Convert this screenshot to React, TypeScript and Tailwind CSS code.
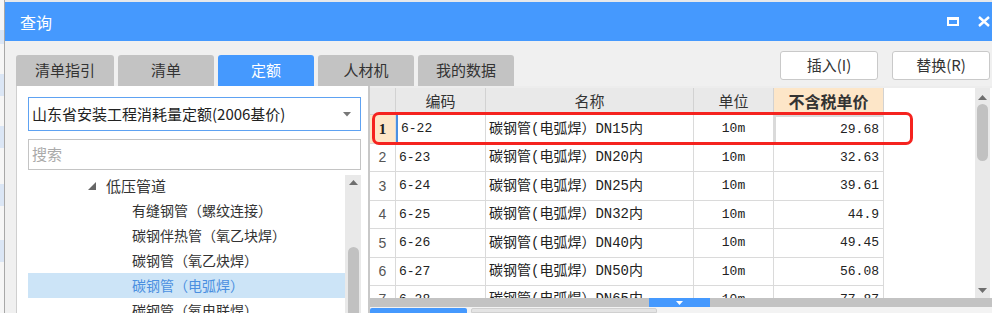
import React from "react";

const rows = [
  { n: 1, code: "6-22", name: "碳钢管(电弧焊）DN15内", unit: "10m", price: "29.68", h: "h-[29px]" },
  { n: 2, code: "6-23", name: "碳钢管(电弧焊）DN20内", unit: "10m", price: "32.63", h: "h-[28px]" },
  { n: 3, code: "6-24", name: "碳钢管(电弧焊）DN25内", unit: "10m", price: "39.61", h: "h-[29px]" },
  { n: 4, code: "6-25", name: "碳钢管(电弧焊）DN32内", unit: "10m", price: "44.9", h: "h-[28px]" },
  { n: 5, code: "6-26", name: "碳钢管(电弧焊）DN40内", unit: "10m", price: "49.45", h: "h-[29px]" },
  { n: 6, code: "6-27", name: "碳钢管(电弧焊）DN50内", unit: "10m", price: "56.08", h: "h-[28px]" },
  { n: 7, code: "6-28", name: "碳钢管(电弧焊）DN65内", unit: "10m", price: "77.87", h: "h-[28px]" },
];

const tabs = [
  { label: "清单指引", w: "w-[98px]" },
  { label: "清单", w: "w-[96px]" },
  { label: "定额", w: "w-[96px]", active: true },
  { label: "人材机", w: "w-[96px]" },
  { label: "我的数据", w: "w-[96px]" },
];

const tree = [
  "有缝钢管（螺纹连接）",
  "碳钢伴热管（氧乙块焊）",
  "碳钢管（氧乙炔焊）",
  "碳钢管（电弧焊）",
  "碳钢管（氧电联焊）",
];

const mono = "font-['Liberation_Mono','Noto_Sans_CJK_SC',monospace]";

export default function App() {
  return (
    <div className="w-[992px] h-[313px] overflow-hidden flex bg-[#e6e8eb] font-['Noto_Sans_CJK_SC',sans-serif] text-[#333]">
      {/* background app peeking out on the left */}
      <div className="w-[5px] flex flex-col border-r border-[#a8a8a8] bg-[#f6f6f6]">
        <div className="h-[30px]" />
        <div className="h-[14px] bg-[#dbe6f5]" />
        <div className="h-[30px]" />
        <div className="h-[22px] bg-[#dbe6f5]" />
        <div className="h-[30px]" />
        <div className="h-[22px] bg-[#dbe6f5]" />
        <div className="h-[36px]" />
        <div className="h-[22px] bg-[#dbe6f5]" />
        <div className="h-[34px]" />
        <div className="h-[22px] bg-[#dbe6f5]" />
      </div>

      <div className="flex-1 flex flex-col mt-[2px] bg-[#f0f0f0]">
        {/* title bar */}
        <div className="h-[39px] shrink-0 bg-[#4599fe] flex items-center pl-[15px] text-white">
          <span className="text-[16px] leading-none">查询</span>
          <div className="ml-auto flex items-center gap-[19px] pr-[2px]">
            <div className="w-[12px] h-[9px] border-2 border-t-[3px] border-white" />
            <svg width="12" height="11" viewBox="0 0 12 11">
              <path d="M1 1 L11 10 M11 1 L1 10" stroke="white" strokeWidth="2.4" />
            </svg>
          </div>
        </div>

        {/* tabs + buttons */}
        <div className="flex items-start pt-[10px] pl-[11px] pr-[2px] shrink-0">
          <div className="flex gap-[4px] mt-[4px]">
            {tabs.map((t) => (
              <div
                key={t.label}
                className={`${t.w} h-[31px] rounded-t-[3px] flex items-center justify-center text-[15px] ${
                  t.active ? "bg-[#4599fe] text-white" : "bg-[#c3c3c3] text-[#333]"
                }`}
              >
                {t.label}
              </div>
            ))}
          </div>
          <div className="ml-auto flex gap-[14px]">
            {["插入(I)", "替换(R)"].map((b) => (
              <div
                key={b}
                className="w-[98px] h-[29px] bg-white border border-[#c9c9c9] rounded-[3px] flex items-center justify-center text-[15px] text-[#333]"
              >
                {b}
              </div>
            ))}
          </div>
        </div>

        {/* content */}
        <div className="flex flex-1 min-h-0">
          {/* left panel */}
          <div className="ml-[11px] w-[354px] bg-white border-l border-[#cfcfcf] border-r-2 border-r-[#c8c8c8] flex flex-col pl-[11px] pr-[7px] pt-[11px]">
            <div className="w-[333px] h-[34px] border border-[#5ea2f2] flex items-center pl-[3px] pr-[9px] text-[15px] text-[#222]">
              <span>山东省安装工程消耗量定额(2006基价)</span>
              <svg className="ml-auto" width="8" height="5" viewBox="0 0 8 5">
                <path d="M0 0 L8 0 L4 4.5 Z" fill="#777" />
              </svg>
            </div>
            <div className="w-[333px] h-[31px] mt-[8px] border border-[#c4c4c4] flex items-center pl-[3px] text-[15px] text-[#aaa]">
              搜索
            </div>
            <div className="flex mt-[5px] flex-1 min-h-0">
              <div className="w-[317px] flex flex-col">
                <div className="h-[25px] flex items-center pl-[60px] text-[15px]">
                  <svg width="8" height="8" viewBox="0 0 8 8">
                    <path d="M8 0 L8 8 L0 8 Z" fill="#666" />
                  </svg>
                  <span className="ml-[10px]">低压管道</span>
                </div>
                {tree.map((t, i) => (
                  <div
                    key={t}
                    className={`h-[25px] shrink-0 flex items-center pl-[104px] text-[14px] ${
                      i === 3 ? "bg-[#cce4f7] text-[#4a8fe0]" : "text-[#333]"
                    }`}
                  >
                    {t}
                  </div>
                ))}
              </div>
              <div className="w-[16px] bg-[#e9e9e9] flex flex-col items-center pt-[5px]">
                <svg width="9" height="5" viewBox="0 0 9 5">
                  <path d="M0 5 L9 5 L4.5 0 Z" fill="#6e6e6e" />
                </svg>
                <div className="mt-[62px] w-[11px] flex-1 rounded-t-full bg-[#c1c1c1]" />
              </div>
            </div>
          </div>

          {/* grid */}
          <div className="flex-1 relative flex flex-col bg-white">
            <div className="h-[2px] bg-[#ededed]" />
            <div className="h-[210px] flex">
              <div className="flex-1 overflow-hidden">
                <div className="flex h-[27px] text-[15px] text-[#333]">
                  <div className="w-[26px] bg-[#e9e9e9] border-r border-b border-[#d2d2d2]" />
                  <div className="w-[90px] bg-[#e9e9e9] border-r border-b border-[#d2d2d2] flex items-center justify-center">编码</div>
                  <div className="w-[208px] bg-[#e9e9e9] border-r border-b border-[#d2d2d2] flex items-center justify-center">名称</div>
                  <div className="w-[80px] bg-[#e9e9e9] border-r border-b border-[#d2d2d2] flex items-center justify-center">单位</div>
                  <div className="w-[110px] bg-[#fde6c8] border-r border-b border-[#d2d2d2] flex items-center justify-center text-[16px] font-bold">不含税单价</div>
                </div>
                {rows.map((r) => (
                  <div key={r.n} className={`flex ${r.h} text-[13px] text-[#222]`}>
                    <div
                      className={`w-[26px] border-r border-b border-[#dadada] flex items-center justify-center ${
                        r.n === 1
                          ? "bg-[#fde6c8] font-['Liberation_Serif',serif] font-bold text-[15px] text-[#222]"
                          : "font-['Liberation_Sans',sans-serif] text-[14px] text-[#555]"
                      }`}
                    >
                      {r.n}
                    </div>
                    <div
                      className={`w-[90px] border-r border-b border-[#dadada] flex items-center pl-[3px] ${mono} ${
                        r.n === 1 ? "border-l-2 border-l-[#4a90e2] pl-[1px]" : ""
                      }`}
                    >
                      {r.code}
                    </div>
                    <div className={`w-[208px] border-r border-b border-[#dadada] flex items-center pl-[3px] text-[14px] ${mono}`}>
                      {r.name}
                    </div>
                    <div className={`w-[80px] border-r border-b border-[#dadada] flex items-center justify-center ${mono}`}>
                      {r.unit}
                    </div>
                    <div
                      className={`w-[110px] border-r border-b border-[#dadada] flex items-center justify-end pr-[4px] ${mono} ${
                        r.n === 1 ? "border-2 border-[#6f6f6f]" : ""
                      }`}
                    >
                      {r.price}
                    </div>
                  </div>
                ))}
              </div>
              <div className="w-[15px] bg-[#e9e9e9] flex flex-col items-center pt-[7px] pb-[5px]">
                <svg width="9" height="5" viewBox="0 0 9 5">
                  <path d="M0 5 L9 5 L4.5 0 Z" fill="#6e6e6e" />
                </svg>
                <div className="mt-[4px] w-[11px] h-[57px] rounded-full bg-[#c1c1c1]" />
                <svg className="mt-auto" width="9" height="5" viewBox="0 0 9 5">
                  <path d="M0 0 L9 0 L4.5 5 Z" fill="#6e6e6e" />
                </svg>
              </div>
              <div className="w-[2px]" />
            </div>
            <div className="h-[9px] bg-[#c3c3c3] flex">
              <div className="ml-[279px] w-[61px] bg-[#4599fe] flex items-center justify-center">
                <svg width="7" height="4" viewBox="0 0 7 4">
                  <path d="M0 0 L7 0 L3.5 4 Z" fill="white" />
                </svg>
              </div>
            </div>
            <div className="flex-1 bg-[#f3f3f3] flex items-end pt-[1px] gap-[4px]">
              <div className="w-[97px] h-full bg-[#4599fe] rounded-t-[2px]" />
              <div className="w-[186px] h-full bg-[#e4e4e4] border border-[#d0d0d0] rounded-t-[2px]" />
            </div>

            {/* red highlight around first row */}
            <div className="absolute left-[2px] top-[26px] w-[541px] h-[33px] border-[3px] border-[#f5231f] rounded-[7px] pointer-events-none" />
          </div>
        </div>
      </div>
    </div>
  );
}
